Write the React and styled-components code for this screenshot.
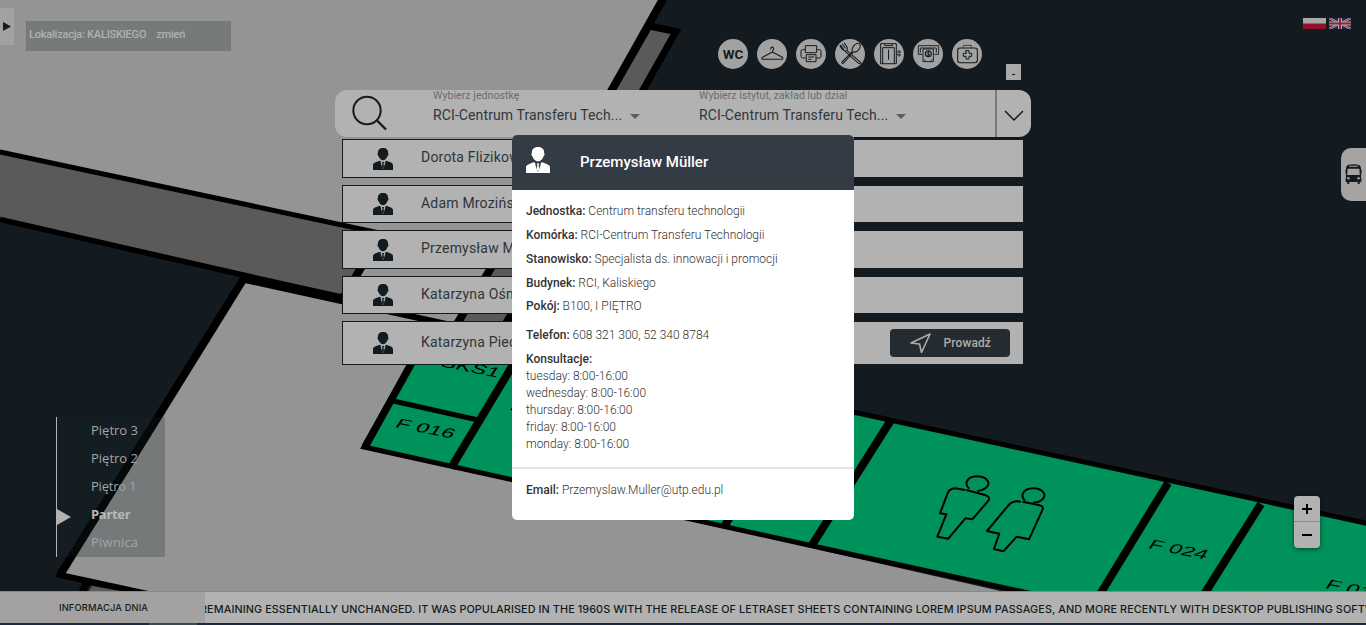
import React from "react";
import styled, { createGlobalStyle } from "styled-components";

const ink = "#131b20";
const panel = "#b2b2b2";

const Global = createGlobalStyle`
  * { box-sizing: border-box; }
  body { margin: 0; background: ${ink}; font-family: Roboto, sans-serif; overflow: hidden; }
`;

const Screen = styled.div`
  position: relative;
  width: 1366px;
  height: 625px;
  overflow: hidden;
  display: grid;
  grid-template-rows: 591px 34px;
  background: ${ink};
`;

const MapLayer = styled.svg`
  position: absolute;
  inset: 0;
`;

const Stage = styled.div`
  position: relative;
  display: grid;
  grid-template-columns: 335px 696px 335px;
`;

/* ---------- left column ---------- */
const LeftColumn = styled.aside`
  display: flex;
  flex-direction: column;
  justify-content: space-between;
  padding: 8px 0 34px;
`;

const LocationBar = styled.div`
  display: flex;
  align-items: flex-start;
  gap: 12px;
`;

const Drawer = styled.button`
  width: 14px;
  height: 37px;
  padding: 0 0 0 3px;
  border: 0;
  background: #a3a2a0;
  display: flex;
  align-items: center;
`;

const Location = styled.div`
  display: flex;
  gap: 10px;
  width: 205px;
  height: 30px;
  margin-top: 13px;
  padding: 7px 3px;
  background: #767a79;
  color: #b0b2b2;
  font-size: 11px;
  line-height: 14px;
  font-weight: 500;
  letter-spacing: -0.22px;
  white-space: nowrap;
`;

const Floors = styled.nav`
  width: 109px;
  height: 140px;
  margin-left: 56px;
  border-left: 1px solid #b2b2b2;
  background: rgba(24, 38, 40, 0.24);
  display: flex;
  flex-direction: column;
`;

const Floor = styled.div`
  position: relative;
  height: 28px;
  padding-left: 34px;
  font-family: "Open Sans", sans-serif;
  font-size: 13px;
  line-height: 27px;
  letter-spacing: ${(p) => p.$spacing || 0}px;
  font-weight: ${(p) => (p.$active ? 700 : 400)};
  color: ${(p) => (p.$active ? "#b8b8b8" : "#a2a5a5")};
  &::before {
    content: "";
    display: ${(p) => (p.$active ? "block" : "none")};
    position: absolute;
    left: 0;
    top: 8px;
    border-left: 14px solid #b2b2b2;
    border-top: 8px solid transparent;
    border-bottom: 8px solid transparent;
  }
`;

/* ---------- centre column ---------- */
const Centre = styled.main`
  display: flex;
  flex-direction: column;
`;

const Services = styled.div`
  height: 90px;
  padding: 39px 0 0 383px;
  display: flex;
  gap: 9px;
  align-items: flex-start;
`;

const Service = styled.div`
  width: 30px;
  height: 30px;
  flex: none;
  border-radius: 50%;
  background: #a3a2a2;
  display: flex;
  align-items: center;
  justify-content: center;
  color: ${ink};
  font-size: 13.5px;
  line-height: 32px;
  font-weight: 700;
`;

const Collapse = styled.button`
  width: 15px;
  height: 16px;
  margin: 25px 0 0 15px;
  padding: 4px 0 0;
  border: 0;
  background: #a9a9a9;
  color: #111;
  font: 12px/12px "Liberation Sans", sans-serif;
`;

const SearchBar = styled.div`
  height: 47px;
  border-radius: 12px;
  background: ${panel};
  display: grid;
  grid-template-columns: 98px 266px 296px 36px;
`;

const SearchIcon = styled.div`
  padding: 5px 0 0 17px;
`;

const Field = styled.label`
  display: flex;
  flex-direction: column;
`;

const FieldName = styled.span`
  height: 15px;
  font-size: 10.5px;
  line-height: 11px;
  letter-spacing: 0.08px;
  color: #6c6c6c;
`;

const FieldValue = styled.span`
  display: flex;
  align-items: center;
  gap: 8px;
  font-size: 14px;
  line-height: 20px;
  letter-spacing: 0.11px;
  color: #30373b;
  &::after {
    content: "";
    margin-top: 2px;
    border: 5px solid transparent;
    border-top-color: #5b5d5d;
    border-bottom: 0;
  }
`;

const Expand = styled.div`
  border-left: 2px solid #777a7b;
  display: flex;
  align-items: center;
  justify-content: center;
  padding-top: 4px;
`;

const People = styled.div`
  display: flex;
  flex-direction: column;
  gap: 7px;
  width: 681px;
  margin: 2px 0 0 7px;
`;

const PersonRow = styled.div`
  height: ${(p) => p.$h}px;
  border: 1px solid ${ink};
  border-right: 0;
  background: ${panel};
  display: flex;
  align-items: center;
  padding: 0 13px 0 30px;
  color: #2d3539;
  font-size: 14px;
  letter-spacing: 0.2px;
  & > span { margin-left: 28px; flex: 1; padding-bottom: 3px; }
`;

const Guide = styled.button`
  width: 120px;
  height: 28px;
  padding: 0 19px 0 20px;
  border: 0;
  border-radius: 4px;
  background: #242b31;
  color: #adadad;
  display: flex;
  align-items: center;
  justify-content: space-between;
  font: 500 12px Roboto, sans-serif;
  letter-spacing: 0.1px;
`;

/* ---------- right column ---------- */
const RightColumn = styled.aside`
  display: flex;
  flex-direction: column;
  align-items: flex-end;
  padding-top: 18px;
`;

const Flags = styled.div`
  display: flex;
  gap: 3px;
  height: 130px;
  padding-right: 15px;
`;

const Transit = styled.div`
  width: 25px;
  height: 53px;
  border-radius: 10px 0 0 10px;
  background: #a6a4a3;
  display: flex;
  align-items: center;
  padding-left: 4px;
`;

const Zoom = styled.div`
  width: 26px;
  height: 52px;
  margin: 295px 46px 0 0;
  border-radius: 4px;
  background: ${panel};
  box-shadow: 0 1px 5px rgba(0, 0, 0, 0.55);
  display: grid;
  grid-template-rows: 25px 27px;
`;

const ZoomButton = styled.div`
  display: flex;
  align-items: center;
  justify-content: center;
  & + & { border-top: 1px solid #8a8a8a; }
`;

/* ---------- footer ---------- */
const Footer = styled.footer`
  position: relative;
  display: grid;
  grid-template-columns: 205px 1161px;
  grid-template-rows: 32px 2px;
  background: #1b2a3c;
`;

const NewsTitle = styled.div`
  border-top: 1px solid #898989;
  background: #a3a2a0;
  color: ${ink};
  font: 500 9.3px/31px Inter, sans-serif;
  letter-spacing: 0.15px;
  padding-left: 59px;
  white-space: nowrap;
`;

const Ticker = styled.div`
  border-top: 1px solid #898989;
  background: ${panel};
  color: ${ink};
  overflow: hidden;
  display: flex;
  font: 500 10.8px/35px Inter, sans-serif;
  letter-spacing: 0.1px;
  white-space: nowrap;
  & > span { margin-left: -5px; }
`;

const Progress = styled.div`
  width: 48px;
  margin-left: 149px;
  background: #3b4b52;
`;

/* ---------- dialog ---------- */
const Dialog = styled.section`
  position: absolute;
  left: 512px;
  top: 135px;
  width: 342px;
  height: 385px;
  border-radius: 5px;
  overflow: hidden;
  background: #fff;
  color: #333;
  font-size: 12px;
`;

const DialogHead = styled.header`
  height: 55px;
  padding: 0 14px;
  background: #333b44;
  color: #fff;
  display: flex;
  align-items: center;
  gap: 30px;
  font-size: 15px;
  font-weight: 500;
  & > svg { margin-top: -5px; }
  & > span { margin-top: -2px; }
`;

const Details = styled.div`
  height: 279px;
  padding: 9px 14px;
  border-bottom: 2px solid #e4e4e4;
`;

const Line = styled.div`
  height: ${(p) => p.$h || 24}px;
  line-height: 24px;
  font-weight: 300;
  white-space: nowrap;
  & > b { font-weight: 500; }
`;

const Hours = styled.div`
  font-weight: 300;
  line-height: 17px;
`;

const Contact = styled.div`
  padding: 9px 14px;
`;

const Person = ({ w, h, color, tie }) => (
  <svg width={w} height={h} viewBox="0 0 20 22" preserveAspectRatio="none">
    <path fill={color} d="M10 0C13.5 0 15.3 2 15.1 5.1C16 6 15.2 7.7 14.4 8.3C13.7 10.7 12.1 12.2 10 12.2S6.3 10.7 5.6 8.3C4.8 7.7 4 6 4.9 5.1C4.7 2 6.5 0 10 0Z" />
    <path fill={color} d="M0 22V17.3C0 15.5 1 14.9 6.6 12.8L10 14.5L13.4 12.8C19 14.9 20 15.5 20 17.3V22Z" />
    <path fill={tie} d="M7.6 12.6L10 14.4L12.4 12.6L12.2 15L10.5 20.5H9.5L7.8 15Z" />
    <path fill={color} d="M8.9 14H11.1L10.6 15.4L11 19L10 20.7L9 19L9.4 15.4Z" />
  </svg>
);

const Glyph = ({ children }) => (
  <svg width="30" height="30" viewBox="0 0 90 90" fill="none" stroke={ink} strokeWidth="3.2" strokeLinecap="round" strokeLinejoin="round">{children}</svg>
);

const Hanger = () => (
  <Glyph><path d="M41 30C41 21 51 24 50 30C49 34 46 34 46 39L76 55C80 59 76 61 73 61H18C13 61 14 56 18 54L46 39" /></Glyph>
);
const Printer = () => (
  <Glyph>
    <path d="M28 31V20H62V31M28 57H20Q15 57 15 52V36Q15 32 20 32H28V41H62V32H70Q75 32 75 37V52Q75 57 70 57H61M32 47H60V68H32ZM38 54H53M38 61H45" strokeWidth="3" />
  </Glyph>
);
const Cutlery = () => (
  <Glyph>
    <path d="M17 19L26 31M22 15L31 27M28 12L36 24Q39 32 34 35Q27 38 21 30L15 21M35 34L77 70Q77 76 71 73L31 38" />
    <path d="M52 38C48 29 57 15 68 13C77 12 78 21 73 29C68 37 60 40 55 39L27 71Q21 77 21 69L52 38" />
  </Glyph>
);
const Elevator = () => (
  <Glyph>
    <path d="M20 73V14H67V73ZM26 73V26H61V73M43.5 33V61M32 15V20H55V15" strokeWidth="3" />
    <path d="M71 39L75 34L79 39ZM71 47L75 52L79 47Z" strokeWidth="2.6" />
  </Glyph>
);
const Atm = () => (
  <Glyph>
    <path d="M27 46H16V20H77V46H65M22 40V27H70V40M30 31V68H61V31ZM34 62L39 67M57 62L52 67" strokeWidth="2.8" />
    <circle cx="46" cy="44" r="9" /><path d="M50 39Q42 37 42 41Q43 44 46 44Q51 45 49 49Q44 52 41 48M46 36V52" strokeWidth="2.6" />
  </Glyph>
);
const FirstAid = () => (
  <Glyph>
    <rect x="17" y="27" width="59" height="44" rx="7" strokeWidth="3.2" />
    <path d="M34 27V19H58V27" stroke="#3c4346" strokeWidth="3" />
    <path d="M42 35H51V43H59V52H51V60H42V52H34V43H42Z" strokeWidth="3" />
  </Glyph>
);

const services = [<Hanger />, <Printer />, <Cutlery />, <Elevator />, <Atm />, <FirstAid />];

const people = [
  ["Dorota Flizikowska", 39],
  ["Adam Mroziński", 38],
  ["Przemysław Müller", 39],
  ["Katarzyna Ośmiałowska", 38],
  ["Katarzyna Piechocka", 44],
];

const RoomLabel = ({ x, y, children }) => (
  <text transform={`matrix(1.6 .32 -.6 .9 ${x} ${y})`} textLength="36" fontFamily="Liberation Sans, sans-serif" fontSize="14" fill="#000">{children}</text>
);

const FloorPlan = () => (
  <MapLayer width="1366" height="625" viewBox="0 0 1366 625">
    <g stroke="#000" strokeWidth="8">
      <path fill="#5a5a5a" stroke="none" d="M0 151L370 231L700 302L640 400L400 330L340 296L0 219Z" />
      <path fill="#949494" strokeWidth="5" d="M-10 -10H669L540 218L520 263L370 231L0 152L-10 150Z" />
      <path fill="none" d="M667 -8L560 182" strokeWidth="8" />
      <path fill="#5a5a5a" d="M649 26L676 31.500L600 166H569Z" strokeWidth="7" />
      <path fill="none" strokeWidth="5.500" d="M0 219.500L243 275L400 310" />
      <path fill="#949494" stroke="none" d="M361 268H491L455 328H380L336 315Z" />
      <path fill="none" d="M368 256L330 320M502 250L446 342M520 300L490 350" />
      <path fill="#949494" d="M243 279L460 327L420 400L820 550L1040 600V640H300L60 575Z" stroke="none" />
      <path fill="none" d="M460 327L243 279.500L60 575L150 594.500" strokeWidth="6" />
      <path fill="none" d="M243.500 279L60 575" strokeWidth="8" />
      <path fill="#5a5a5a" stroke="none" d="M92 586L125 592H88Z" />
      <path fill="none" strokeWidth="7" d="M88 581L82 592" />
      <path fill="#00925b" strokeWidth="5" d="M364 447L430 330L860 413.500L1400 530.500V674L813 546Z" />
      <path fill="none" strokeWidth="7.500" d="M365 447L430 330" />
      <path fill="none" strokeWidth="5" d="M391 400.500L478 420" />
      <path fill="none" d="M451 468L517 358M724 527L789 417M811.500 546L891 420M1096.500 600L1168 483M1200.500 600L1261 504" strokeWidth="8" />
    </g>
    <RoomLabel x="394" y="427">F 016</RoomLabel>
    <RoomLabel x="439" y="366">SKS1</RoomLabel>
    <RoomLabel x="1147" y="548">F 024</RoomLabel>
    <RoomLabel x="1324" y="588">F 010</RoomLabel>
    <path d="M511 410l4-5" stroke="#000" strokeWidth="2" />
    <g transform="translate(640 400) scale(.33333)" fill="none" stroke="#000" strokeWidth="6" strokeLinejoin="round">
      <path d="M987 266C970 248 984 230 1010 229C1038 229 1052 246 1042 259Q1034 270 1012 273M976 270L945 265Q929 267 924 277L900 340L919 343L892 410L925 416L976 355L997 358L1046 301Q1051 290 1035 285L979 270" />
      <path d="M1155 302C1138 285 1152 266 1178 265C1206 264 1220 282 1210 295Q1202 306 1180 308M1143 305Q1120 301 1107 314L1041 393L1078 401L1062 447L1090 454L1130 410L1167 418L1208 328Q1212 318 1194 314L1147 305" />
    </g>
  </MapLayer>
);

const Bus = () => (
  <svg width="17" height="21" viewBox="0 0 18 22">
    <path fill={ink} fillRule="evenodd" d="M3 1Q9-.6 15 1Q17 2 17 6V15Q18 16 17 19H15.6V21H13.5V19H4.5V21H2.4V19H1Q0 16 1 15V6Q1 2 3 1ZM4.5 1.8V2.8H13.5V1.8ZM2.8 5L2.3 11.5H15.7L15.2 5ZM2.3 14V16H5V14ZM13 14V16H15.7V14Z" />
    <path d="M.3 6V10M17.7 6V10" stroke={ink} strokeWidth=".7" />
  </svg>
);

export default function App() {
  return (
    <Screen>
      <Global />
      <FloorPlan />
      <Stage>
        <LeftColumn>
          <LocationBar>
            <Drawer><svg width="8" height="9" viewBox="0 0 8 9"><path d="M0 0L8 4.5L0 9Z" fill={ink} /></svg></Drawer>
            <Location><span>Lokalizacja: KALISKIEGO</span><span>zmień</span></Location>
          </LocationBar>
          <Floors>
            <Floor>Piętro 3</Floor>
            <Floor>Piętro 2</Floor>
            <Floor $spacing={-0.2}>Piętro 1</Floor>
            <Floor $active $spacing={-0.3}>Parter</Floor>
            <Floor $spacing={0.2}>Piwnica</Floor>
          </Floors>
        </LeftColumn>

        <Centre>
          <Services>
            <Service>WC</Service>
            {services.map((icon, i) => <Service key={i}>{icon}</Service>)}
            <Collapse>-</Collapse>
          </Services>
          <SearchBar>
            <SearchIcon>
              <svg width="36" height="36" viewBox="0 0 36 36" fill="none" stroke={ink} strokeWidth="2"><circle cx="15" cy="15.5" r="13.7" /><path d="M25 25.5L34 34.5" strokeWidth="2.4" /></svg>
            </SearchIcon>
            <Field><FieldName>Wybierz jednostkę</FieldName><FieldValue>RCI-Centrum Transferu Tech...</FieldValue></Field>
            <Field><FieldName>Wybierz istytut, zakład lub dział</FieldName><FieldValue>RCI-Centrum Transferu Tech...</FieldValue></Field>
            <Expand><svg width="20" height="12" viewBox="0 0 20 12"><path d="M1 1L10 10L19 1" fill="none" stroke={ink} strokeWidth="1.5" /></svg></Expand>
          </SearchBar>
          <People>
            {people.map(([name, h], i) => (
              <PersonRow key={name} $h={h}>
                <Person w={20} h={22} color={ink} tie={panel} />
                <span>{name}</span>
                {i === 4 && (
                  <Guide>
                    <svg width="21" height="21" viewBox="0 0 21 21"><path d="M1 10L20 1L11.5 19.5L9.5 11Z" fill="none" stroke="#adadad" strokeWidth="1.6" strokeLinejoin="round" /></svg>
                    Prowadź
                  </Guide>
                )}
              </PersonRow>
            ))}
          </People>
        </Centre>

        <RightColumn>
          <Flags>
            <svg width="23" height="11" viewBox="0 0 23 11"><path fill="#a9a9a9" d="M0 0H23V11H0Z" /><path fill="#960f2c" d="M0 5.5H23V11H0Z" /></svg>
            <svg width="22" height="11" viewBox="0 0 22 11">
              <path fill="#1a2459" d="M0 0H22V11H0Z" />
              <path stroke="#a9a9a9" strokeWidth="2.2" d="M0 0L22 11M22 0L0 11" /><path stroke="#932437" strokeWidth=".8" d="M0 0L22 11M22 0L0 11" />
              <path stroke="#a9a9a9" strokeWidth="4" d="M11 0V11M0 5.5H22" /><path stroke="#932437" strokeWidth="2" d="M11 0V11M0 5.5H22" />
            </svg>
          </Flags>
          <Transit><Bus /></Transit>
          <Zoom>
            <ZoomButton><svg width="10" height="10"><path d="M0 5H10M5 0V10" stroke="#000" strokeWidth="2" /></svg></ZoomButton>
            <ZoomButton><svg width="10" height="10"><path d="M0 5H10" stroke="#000" strokeWidth="2" /></svg></ZoomButton>
          </Zoom>
        </RightColumn>
      </Stage>

      <Footer>
        <NewsTitle>INFORMACJA DNIA</NewsTitle>
        <Ticker><span>REMAINING ESSENTIALLY UNCHANGED. IT WAS POPULARISED IN THE 1960S WITH THE RELEASE OF LETRASET SHEETS CONTAINING LOREM IPSUM PASSAGES, AND MORE RECENTLY WITH DESKTOP PUBLISHING SOFTWARE</span></Ticker>
        <Progress />
      </Footer>

      <Dialog>
        <DialogHead><Person w={24} h={26} color="#fff" tie="#333b44" /><span>Przemysław Müller</span></DialogHead>
        <Details>
          <Line><b>Jednostka:</b> Centrum transferu technologii</Line>
          <Line><b>Komórka:</b> RCI-Centrum Transferu Technologii</Line>
          <Line><b>Stanowisko:</b> Specjalista ds. innowacji i promocji</Line>
          <Line $h={23}><b>Budynek:</b> RCI, Kaliskiego</Line>
          <Line $h={29}><b>Pokój:</b> B100, I PIĘTRO</Line>
          <Line><b>Telefon:</b> 608 321 300, 52 340 8784</Line>
          <Line $h={21}><b>Konsultacje:</b></Line>
          {["tuesday", "wednesday", "thursday", "friday", "monday"].map((d) => <Hours key={d}>{d}: 8:00-16:00</Hours>)}
        </Details>
        <Contact><Line><b>Email:</b> Przemyslaw.Muller@utp.edu.pl</Line></Contact>
      </Dialog>
    </Screen>
  );
}
